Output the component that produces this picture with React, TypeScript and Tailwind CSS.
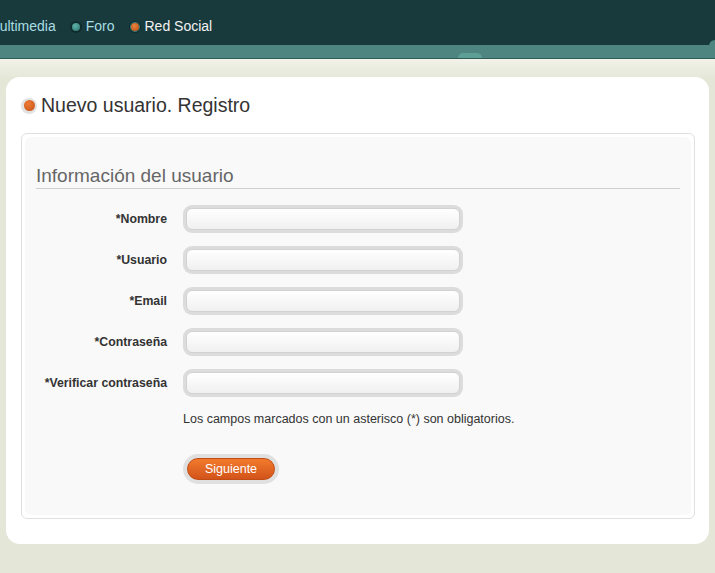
import React from "react";

const fields = ["*Nombre", "*Usuario", "*Email", "*Contraseña", "*Verificar contraseña"];

function NavDot({ orange }: { orange?: boolean }) {
  return (
    <span className="flex h-[12px] w-[12px] items-center justify-center rounded-full bg-[#0f2b2d]">
      <span
        className={
          orange
            ? "h-[8px] w-[8px] rounded-full bg-[radial-gradient(circle_at_40%_35%,#e9843d,#b84d16)] ring-1 ring-[#3b7f78]"
            : "h-[8px] w-[8px] rounded-full bg-[radial-gradient(circle_at_40%_35%,#5cb3aa,#2d7069)]"
        }
      />
    </span>
  );
}

export default function App() {
  return (
    <div className="relative min-h-[573px] w-[715px] overflow-hidden bg-[#e4e7d7] font-['Liberation_Sans',Arial,sans-serif]">
      {/* Header */}
      <div className="relative h-[59px] border-b border-[#2f5d5b] bg-[#4e8581]">
        <div className="flex h-[45px] items-center gap-[14px] bg-[#183a3d] pt-[8px] text-[14px]">
          <span className="ml-[-12px] text-[#a9dde3]">Multimedia</span>
          <span className="flex items-center gap-[4px] text-[#a9dde3]">
            <NavDot />
            Foro
          </span>
          <span className="flex items-center gap-[4px] text-[#f2f2f2]">
            <NavDot orange />
            Red Social
          </span>
        </div>
        <div className="absolute right-0 top-[40px] h-[6px] w-[6px] rounded-tl-full bg-[#4e8581]" />
        <div className="absolute left-[458px] top-[53px] h-[5px] w-[24px] rounded-t-full bg-[#5e9f95]" />
      </div>

      {/* cream gradient strip */}
      <div className="h-[18px] bg-gradient-to-b from-[#f2f2e9] to-[#e6e8da]" />

      {/* Card */}
      <div className="ml-[6px] w-[703px] rounded-[14px] bg-white pb-[25px] pl-[15px] pr-[14px] pt-[17px]">
        <div className="flex items-center gap-[4px]">
          <span className="flex h-[16px] w-[16px] items-center justify-center rounded-full bg-[#e2e2e2]">
            <span className="h-[11px] w-[11px] rounded-full bg-[radial-gradient(circle_at_40%_35%,#ee7a33,#c4511a)]" />
          </span>
          <h1 className="text-[19.5px] leading-[23px] text-[#333]">Nuevo usuario. Registro</h1>
        </div>

        <div className="mt-[16px] rounded-[6px] border border-[#e0e0e0] bg-white p-[3px]">
          <div className="rounded-[6px] bg-[#f9f9f9] px-[11px] pb-[31px] pt-[28px]">
            <h2 className="border-b border-[#cfcfcf] pb-[1px] text-[19px] leading-[22px] text-[#666]">
              Información del usuario
            </h2>

            <div className="mt-[16px] flex flex-col gap-[13px]">
              {fields.map((f) => (
                <div key={f} className="flex items-center gap-[16px]">
                  <label className="w-[131px] text-right text-[12.3px] font-bold text-[#333]">{f}</label>
                  <div className="w-[280px] rounded-[9px] bg-[#dcdcdc] p-[3px]">
                    <input
                      type="text"
                      className="block h-[22px] w-full rounded-[6px] border border-[#d2d2d2] bg-gradient-to-b from-white to-[#f0f0f0] outline-none"
                    />
                  </div>
                </div>
              ))}
            </div>

            <p className="ml-[147px] mt-[15px] text-[12.5px] leading-[14px] text-[#333]">
              Los campos marcados con un asterisco (*) son obligatorios.
            </p>

            <div className="ml-[147px] mt-[28px] w-[96px] rounded-full bg-[#e0e0e0] p-[4px]">
              <button className="block h-[22px] w-[88px] rounded-full border border-[#c24d14] bg-gradient-to-b from-[#f27b2c] to-[#d2531a] text-[12.5px] text-white">
                Siguiente
              </button>
            </div>
          </div>
        </div>
      </div>
    </div>
  );
}
